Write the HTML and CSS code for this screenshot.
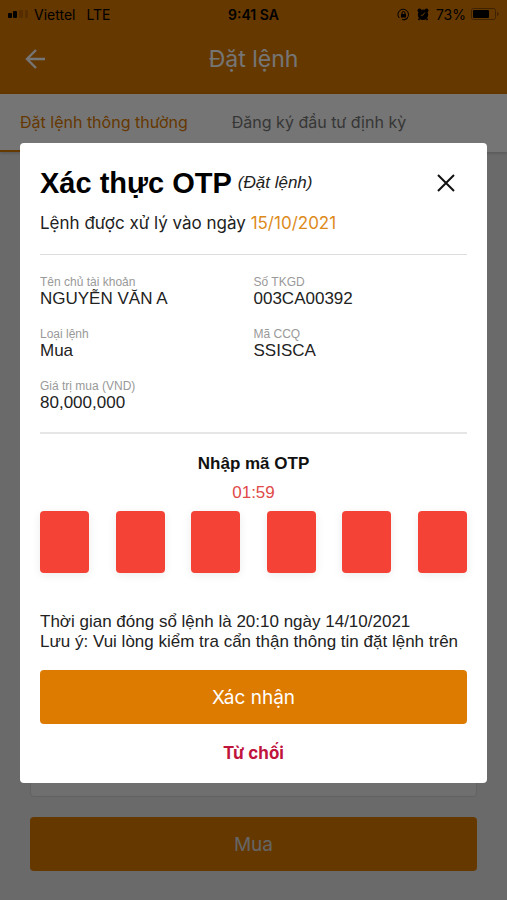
FILE: index.html
```html
<!DOCTYPE html>
<html lang="vi">
<head>
    <meta charset="UTF-8">
    <meta name="viewport" content="width=device-width, initial-scale=1.0">
    <title>Đặt lệnh</title>
    <link rel="stylesheet" href="styles.css">
</head>
<body>
    <div class="page">
        <header class="header">
            <div class="status-bar">
                <div class="status-left">
                    <svg width="21" height="8" viewBox="0 0 21 8">
                        <rect x="0" y="3" width="4" height="5" rx="1" fill="#000"/>
                        <rect x="5" y="1" width="4" height="7" rx="1" fill="#000"/>
                        <rect x="11" y="0" width="4" height="8" rx="1" fill="#b96200"/>
                        <rect x="17" y="0" width="3" height="8" rx="1" fill="#b96200"/>
                    </svg>
                    <span>Viettel</span>
                    <span class="network">LTE</span>
                </div>
                <div class="status-time">9:41 SA</div>
                <div class="status-right">
                    <svg width="13" height="13" viewBox="0 0 13 13" fill="none" stroke="#000">
                        <path d="M2.2 10A5.3 5.3 0 1 1 5 11.7M10.8 10A5.3 5.3 0 0 1 7 11.8" stroke-width="1"/>
                        <rect x="4" y="6" width="5" height="3.5" fill="#000" stroke="none"/>
                        <path d="M5 6V5a1.5 1.5 0 0 1 3 0v1"/>
                    </svg>
                    <svg class="alarm" width="12" height="13" viewBox="0 0 12 13">
                        <circle cx="2.5" cy="2.5" r="2" fill="#000"/>
                        <circle cx="9.5" cy="2.5" r="2" fill="#000"/>
                        <circle cx="6" cy="6.8" r="5.2" fill="#000"/>
                        <path d="M2.5 10.5L1.5 12M9.5 10.5l1 1.5" stroke="#000" stroke-width="1.6"/>
                        <path d="M7.8 4.5L6 7.2H3.8" fill="none" stroke="#dd7a00"/>
                    </svg>
                    <span>73%</span>
                    <svg width="28" height="12" viewBox="0 0 28 12">
                        <rect x="0.5" y="0.5" width="24" height="11" rx="2" fill="none" stroke="#8a4a00"/>
                        <rect x="2" y="2" width="16" height="8" rx="1" fill="#000"/>
                        <path d="M26 3.5L28 6l-2 2.5z" fill="#8a4a00"/>
                    </svg>
                </div>
            </div>
            <div class="nav-bar">
                <button type="button" class="back-btn" aria-label="Quay lại">
                    <svg width="20" height="20" viewBox="0 0 20 20" fill="none" stroke="#fff" stroke-width="2.4">
                        <path d="M11 1L2 10l9 9M2 10h18"/>
                    </svg>
                </button>
                <h1>Đặt lệnh</h1>
            </div>
        </header>

        <nav class="tabs">
            <a href="#" class="tab active">Đặt lệnh thông thường</a>
            <a href="#" class="tab">Đăng ký đầu tư định kỳ</a>
        </nav>

        <main class="content">
            <div class="order-card"></div>
            <button type="button" class="btn">Mua</button>
        </main>
    </div>

    <div class="overlay">
        <form class="modal" role="dialog" aria-labelledby="otpTitle">
            <div class="modal-header">
                <h2 id="otpTitle">Xác thực OTP</h2>
                <em>(Đặt lệnh)</em>
                <button type="button" class="close-btn" aria-label="Đóng">
                    <svg width="18" height="18" viewBox="0 0 18 18" fill="none" stroke="#111" stroke-width="2">
                        <path d="M1 1l16 16M17 1L1 17"/>
                    </svg>
                </button>
            </div>
            <p class="process-date">Lệnh được xử lý vào ngày <span>15/10/2021</span></p>

            <dl class="info">
                <div>
                    <dt>Tên chủ tài khoản</dt>
                    <dd>NGUYỄN VĂN A</dd>
                </div>
                <div>
                    <dt>Số TKGD</dt>
                    <dd>003CA00392</dd>
                </div>
                <div>
                    <dt>Loại lệnh</dt>
                    <dd>Mua</dd>
                </div>
                <div>
                    <dt>Mã CCQ</dt>
                    <dd>SSISCA</dd>
                </div>
                <div>
                    <dt>Giá trị mua (VND)</dt>
                    <dd>80,000,000</dd>
                </div>
            </dl>

            <label class="otp-label" for="otp1">Nhập mã OTP</label>
            <div class="timer">01:59</div>
            <div class="otp-inputs">
                <input type="text" id="otp1" maxlength="1" inputmode="numeric">
                <input type="text" maxlength="1" inputmode="numeric" aria-label="Số thứ 2">
                <input type="text" maxlength="1" inputmode="numeric" aria-label="Số thứ 3">
                <input type="text" maxlength="1" inputmode="numeric" aria-label="Số thứ 4">
                <input type="text" maxlength="1" inputmode="numeric" aria-label="Số thứ 5">
                <input type="text" maxlength="1" inputmode="numeric" aria-label="Số thứ 6">
            </div>

            <p class="note">Thời gian đóng sổ lệnh là 20:10 ngày 14/10/2021<br>Lưu ý: Vui lòng kiểm tra cẩn thận thông tin đặt lệnh trên</p>

            <button type="submit" class="btn">Xác nhận</button>
            <button type="button" class="reject-btn">Từ chối</button>
        </form>
    </div>
</body>
</html>
```
FILE: styles.css
```css
* {
    box-sizing: border-box;
}
body {
    margin: 0;
    font-family: "Liberation Sans", Arial, sans-serif;
    color: #222;
}
h1, h2, p, dl, dd {
    margin: 0;
}
button {
    border: none;
    padding: 0;
    background: none;
    cursor: pointer;
}
svg {
    display: block;
}

/* Page behind the dialog */
.page {
    display: flex;
    flex-direction: column;
    min-height: 100vh;
    background-color: #e6e6e6;
}
.header {
    padding-bottom: 4px;
    background-color: #dd7a00;
}
.status-bar {
    display: grid;
    grid-template-columns: 1fr auto 1fr;
    align-items: center;
    height: 28px;
    padding: 0 8px;
    font-family: Inter, sans-serif;
    font-size: 14px;
    color: #000;
}
.status-left, .status-right {
    display: flex;
    align-items: center;
    gap: 5px;
}
.status-right {
    justify-content: flex-end;
}
.network {
    margin-left: 6px;
}
.alarm {
    margin: 0 2px;
}
.status-time {
    font-weight: 600;
}
.nav-bar {
    display: grid;
    grid-template-columns: 20px 1fr 20px;
    align-items: center;
    height: 62px;
    padding: 0 25px;
}
.nav-bar h1 {
    font-family: Inter, sans-serif;
    font-size: 23px;
    font-weight: 400;
    text-align: center;
    color: #fff;
}
.tabs {
    display: flex;
    gap: 4px;
    height: 58px;
    background-color: #fff;
    box-shadow: 0 1px 3px rgba(0, 0, 0, 0.2);
}
.tab {
    padding: 0 20px;
    line-height: 56px;
    font-family: Inter, sans-serif;
    font-size: 16px;
    white-space: nowrap;
    text-decoration: none;
    color: #777;
}
.tab.active {
    color: #dd7a00;
    border-bottom: 2px solid #dd7a00;
}
.content {
    display: flex;
    flex-direction: column;
    flex: 1;
    gap: 20px;
    padding: 20px 30px 29px;
}
.order-card {
    flex: 1;
    border: 1px solid #d5d5d5;
    border-radius: 4px;
    background-color: #f2f2f2;
}
.btn {
    width: 100%;
    height: 54px;
    border-radius: 4px;
    background-color: #dd7a00;
    font-family: Inter, sans-serif;
    font-size: 19px;
    color: #fff;
}
.content .btn {
    color: #ddd;
}

/* OTP dialog */
.overlay {
    position: absolute;
    top: 0;
    left: 0;
    width: 100%;
    min-height: 100%;
    padding: 143px 20px 20px;
    background-color: rgba(0, 0, 0, 0.54);
}
.modal {
    padding: 19px 20px 15px;
    border-radius: 4px;
    background-color: #fff;
}
.modal-header {
    display: flex;
    align-items: center;
    gap: 6px;
    height: 42px;
}
.modal-header h2 {
    font-size: 29px;
    color: #000;
}
.modal-header em {
    font-size: 17px;
}
.close-btn {
    margin-left: auto;
    padding: 12px;
}
.process-date {
    padding: 8px 0 20px;
    line-height: 22px;
    font-family: Inter, sans-serif;
    font-size: 17px;
}
.process-date span {
    color: #dd8a1a;
}
.info {
    display: grid;
    grid-template-columns: 1fr 1fr;
    row-gap: 18px;
    padding: 20px 0 19px;
    border-top: 1px solid #ddd;
    border-bottom: 2px solid #e6e6e6;
}
.info dt {
    line-height: 14px;
    font-size: 12px;
    color: #999;
}
.info dd {
    line-height: 20px;
    font-size: 17px;
}
.otp-label {
    display: block;
    padding-top: 18px;
    line-height: 24px;
    font-size: 17px;
    font-weight: bold;
    text-align: center;
    color: #111;
}
.timer {
    padding: 7px 0 8px;
    line-height: 20px;
    font-size: 17px;
    text-align: center;
    color: #e04a48;
}
.otp-inputs {
    display: flex;
    justify-content: space-between;
}
.otp-inputs input {
    width: 49px;
    height: 62px;
    padding: 0;
    border: none;
    border-radius: 4px;
    background-color: #f44336;
    box-shadow: 0 2px 10px rgba(0, 0, 0, 0.08);
    font-size: 24px;
    text-align: center;
    color: #fff;
}
.note {
    padding: 39px 0 18px;
    line-height: 20px;
    font-size: 17px;
}
.reject-btn {
    display: block;
    margin: 14px auto 0;
    line-height: 30px;
    font-family: Inter, sans-serif;
    font-size: 17px;
    font-weight: bold;
    color: #c0143c;
}
```
